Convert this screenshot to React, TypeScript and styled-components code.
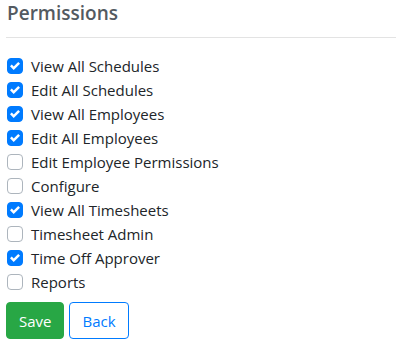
import React, { useState } from "react";
import styled, { createGlobalStyle } from "styled-components";

const Global = createGlobalStyle`
  html, body { margin: 0; padding: 0; background: #fff; }
  body { font-family: "Open Sans", "Noto Sans", sans-serif; color: #212529; }
`;

const Page = styled.div`
  padding: 0 0 0 6px;
`;

const Heading = styled.h5`
  margin: 0;
  height: 38px;
  box-sizing: border-box;
  padding-top: 1px;
  font-size: 19px;
  line-height: 24px;
  font-weight: 600;
  color: #535a61;
  border-bottom: 1px solid #e3e3e3;
  padding-left: 1px;
`;

const List = styled.div`
  display: flex;
  flex-direction: column;
  padding-top: 16px;
`;

const Row = styled.label`
  display: flex;
  align-items: center;
  gap: 8px;
  height: 24px;
  font-size: 15px;
  cursor: pointer;
`;

const Box = styled.span<{ $checked: boolean }>`
  width: 16px;
  height: 16px;
  box-sizing: border-box;
  border-radius: 4px;
  display: flex;
  align-items: center;
  justify-content: center;
  flex-shrink: 0;
  background: ${(p) => (p.$checked ? "#007bff" : "#fff")};
  border: 1px solid ${(p) => (p.$checked ? "#007bff" : "#adb5bd")};
  margin-left: 1px;
`;

const Buttons = styled.div`
  display: flex;
  gap: 5px;
  margin-top: 8px;
`;

const Button = styled.button<{ $variant: "save" | "back" }>`
  font-family: inherit;
  font-size: 15px;
  height: 37px;
  padding: 0 12px;
  border-radius: 4px;
  cursor: pointer;
  background: ${(p) => (p.$variant === "save" ? "#28a745" : "#fff")};
  color: ${(p) => (p.$variant === "save" ? "#fff" : "#007bff")};
  border: 1px solid ${(p) => (p.$variant === "save" ? "#28a745" : "#007bff")};
`;

const Check = () => (
  <svg width="10" height="10" viewBox="0 0 8 8">
    <path fill="#fff" d="M6.564.75l-3.59 3.612-1.538-1.55L0 4.26l2.974 2.99L8 2.193z" />
  </svg>
);

const items: [string, boolean][] = [
  ["View All Schedules", true],
  ["Edit All Schedules", true],
  ["View All Employees", true],
  ["Edit All Employees", true],
  ["Edit Employee Permissions", false],
  ["Configure", false],
  ["View All Timesheets", true],
  ["Timesheet Admin", false],
  ["Time Off Approver", true],
  ["Reports", false],
];

export default function App() {
  const [state, setState] = useState(items.map((i) => i[1]));
  return (
    <Page>
      <Global />
      <Heading>Permissions</Heading>
      <List>
        {items.map(([label], i) => (
          <Row key={label} onClick={() => setState((s) => s.map((v, j) => (j === i ? !v : v)))}>
            <Box $checked={state[i]}>{state[i] && <Check />}</Box>
            {label}
          </Row>
        ))}
      </List>
      <Buttons>
        <Button $variant="save">Save</Button>
        <Button $variant="back">Back</Button>
      </Buttons>
    </Page>
  );
}
